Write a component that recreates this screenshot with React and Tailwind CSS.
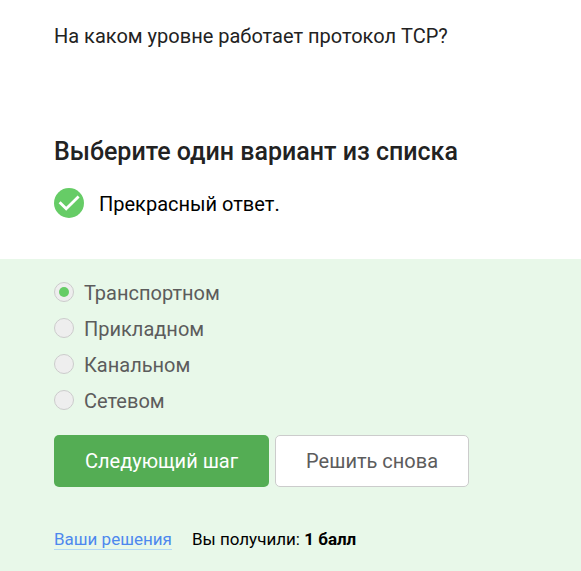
import React, { useState } from "react";

const options = ["Транспортном", "Прикладном", "Канальном", "Сетевом"];

export default function App() {
  const [answer, setAnswer] = useState(options[0]);
  return (
    <main className="flex min-h-screen flex-col bg-white font-['Roboto',sans-serif] text-[#222222]">
      <section className="px-[54px] pt-5 pb-[39px]">
        <p className="text-xl leading-8">На каком уровне работает протокол TCP?</p>
        <h1 className="mt-[84px] text-[25px] font-medium leading-8">Выберите один вариант из списка</h1>
        <div className="mt-5 flex items-start gap-[15px] text-black">
          <svg className="size-[30px] shrink-0" viewBox="0 0 30 30" aria-hidden="true">
            <circle cx="15" cy="15" r="15" fill="#66cc66" />
            <path d="M5.6 14.2l6.6 6.6L24.6 8.4" fill="none" stroke="#fff" strokeWidth="2.8" />
          </svg>
          <p className="text-xl leading-8">Прекрасный ответ.</p>
        </div>
      </section>
      <form className="flex-1 bg-[#e8f8e9] px-[54px] pt-4 pb-5" onSubmit={(e) => e.preventDefault()}>
        <fieldset className="flex flex-col items-start">
          {options.map((o) => (
            <label key={o} className="flex h-9 items-center gap-[10px] text-xl text-[#5c5c5c]">
              <input
                type="radio"
                name="answer"
                checked={answer === o}
                onChange={() => setAnswer(o)}
                className="mb-0.5 grid size-5 appearance-none place-items-center rounded-full border border-[#cccccc] bg-[#eeeeee] before:size-2.5 before:rounded-full checked:before:bg-[#66cc66]"
              />
              {o}
            </label>
          ))}
        </fieldset>
        <div className="mt-4 flex flex-wrap gap-1.5">
          <button type="button" className="h-[52px] rounded-[5px] bg-[#54ad54] px-[31px] text-xl text-white">Следующий шаг</button>
          <button type="button" className="h-[52px] rounded-[5px] border border-[#cccccc] bg-white px-[30px] text-xl text-[#5c5c5c]">Решить снова</button>
        </div>
        <div className="mt-10 flex flex-wrap items-baseline gap-x-5 text-[17px] leading-6 text-black">
          <a href="#solutions" className="border-b border-[#b3d9f5] leading-5 text-[#4d88ee]">Ваши решения</a>
          <p>Вы получили: <b>1 балл</b></p>
        </div>
      </form>
    </main>
  );
}
